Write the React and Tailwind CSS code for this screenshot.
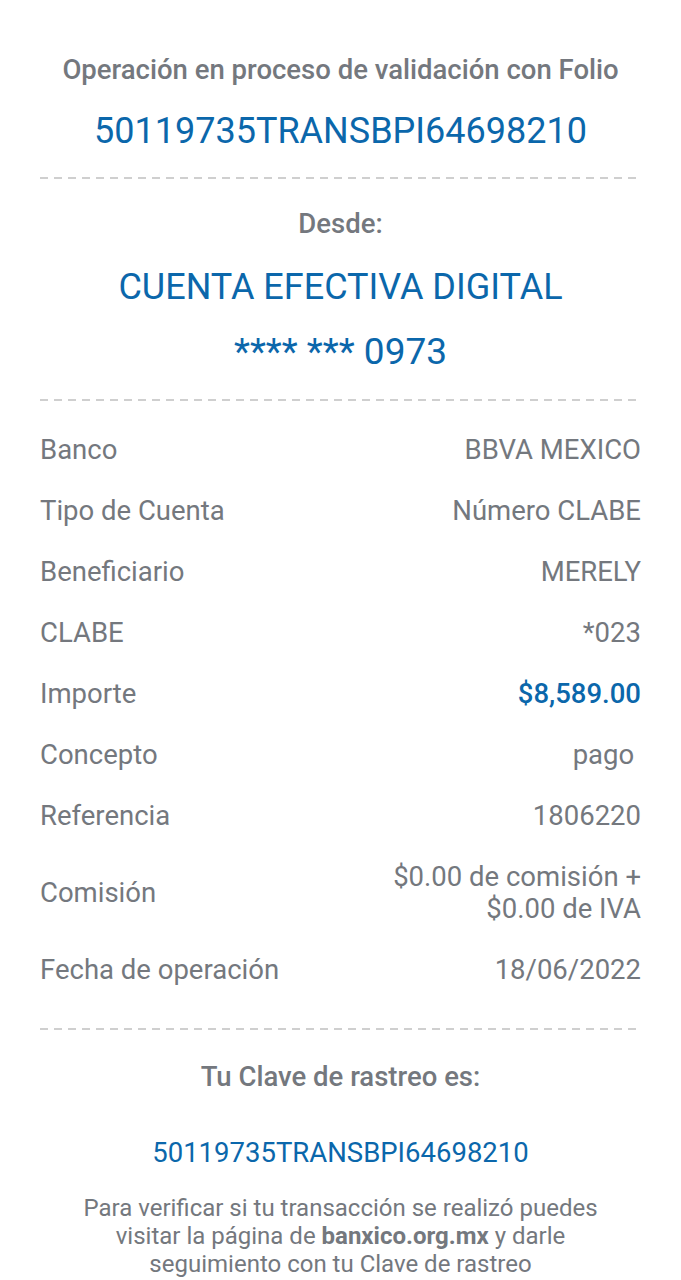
import React from "react";

const Dash = () => (
  <div className="h-[2px] w-full bg-[repeating-linear-gradient(to_right,#cfcfcf_0px,#cfcfcf_8px,transparent_8px,transparent_14px)]" />
);

const rows = [
  ["Banco", "BBVA MEXICO"],
  ["Tipo de Cuenta", "Número CLABE"],
  ["Beneficiario", "MERELY"],
  ["CLABE", "*023"],
  ["Importe", "$8,589.00", true],
  ["Concepto", "pago\u00a0"],
  ["Referencia", "1806220"],
];

export default function App() {
  return (
    <div
      className="w-[681px] h-[1280px] overflow-hidden bg-white px-10 text-[#74787e]"
      style={{ fontFamily: "Roboto, 'Liberation Sans', sans-serif" }}
    >
      <div className="pt-[53px] text-center text-[27.5px] font-medium leading-[34px] whitespace-nowrap">
        Operación en proceso de validación con Folio
      </div>
      <div className="mt-[20px] text-center text-[36px] leading-[48px] text-[#0b67ab]">
        50119735TRANSBPI64698210
      </div>
      <div className="mt-[22px]">
        <Dash />
      </div>
      <div className="mt-[29px] text-center text-[27.5px] font-medium leading-[32px]">Desde:</div>
      <div className="mt-[25px] text-center text-[36px] leading-[44px] text-[#0b67ab]">
        CUENTA EFECTIVA DIGITAL
      </div>
      <div className="mt-[21px] text-center text-[37px] leading-[44px] text-[#0b67ab]">
        **** *** 0973
      </div>
      <div className="mt-[25px]">
        <Dash />
      </div>
      <div className="mt-[33px] flex flex-col gap-[29px] text-[27.5px] leading-[32px]">
        {rows.map(([l, v, blue]) => (
          <div key={l} className="flex justify-between">
            <span>{l}</span>
            <span className={blue ? "font-medium text-[#0b67ab]" : ""}>{v}</span>
          </div>
        ))}
        <div className="flex items-center justify-between">
          <span>Comisión</span>
          <span className="text-right">
            $0.00 de comisión +
            <br />
            $0.00 de IVA
          </span>
        </div>
        <div className="flex justify-between">
          <span>Fecha de operación</span>
          <span>18/06/2022</span>
        </div>
      </div>
      <div className="mt-[42px]">
        <Dash />
      </div>
      <div className="mt-[30px] text-center text-[27.5px] font-medium leading-[34px]">
        Tu Clave de rastreo es:
      </div>
      <div className="mt-[41px] text-center text-[27.5px] leading-[36px] text-[#0b67ab]">
        50119735TRANSBPI64698210
      </div>
      <div className="mt-[23px] text-center text-[24px] leading-[28px] whitespace-nowrap">
        Para verificar si tu transacción se realizó puedes
        <br />
        visitar la página de <span className="font-bold">banxico.org.mx</span> y darle
        <br />
        seguimiento con tu Clave de rastreo
      </div>
    </div>
  );
}
